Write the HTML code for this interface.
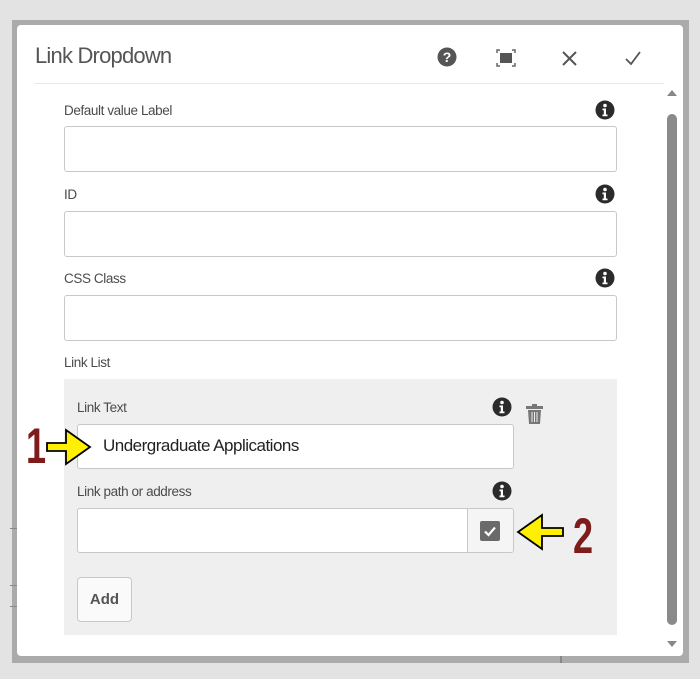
<!DOCTYPE html>
<html><head><meta charset="utf-8"><style>
*{margin:0;padding:0;box-sizing:border-box}
body{width:700px;height:679px;background:#e3e3e3;position:relative;overflow:hidden;font-family:"Liberation Sans",sans-serif}
.a{position:absolute}
.frame{left:12px;top:20px;width:677px;height:643px;background:#ababab}
.dlg{left:17px;top:25px;width:666px;height:631px;background:#fff;border-radius:4px}
.lbl{font-size:13.5px;color:#4b4b4b;letter-spacing:-0.4px}
.inp{background:#fff;border:1px solid #c8c8c8;border-radius:3px}
.info{width:20px;height:20px}
.num{font-family:"Liberation Sans Narrow","Liberation Sans",sans-serif;font-size:48px;font-weight:bold;color:#7e1b1b;transform:scale(0.75,1.05);transform-origin:left top;line-height:40px}
</style></head><body>
<div class="a frame"></div>
<div class="a" style="left:10px;top:528px;width:7px;height:1px;background:#888"></div>
<div class="a" style="left:10px;top:585px;width:7px;height:1px;background:#888"></div>
<div class="a" style="left:10px;top:606px;width:7px;height:1px;background:#888"></div>
<div class="a" style="left:560px;top:655px;width:2px;height:8px;background:#888"></div>
<div class="a dlg"></div>
<div class="a" style="left:35px;top:43px;font-size:22px;color:#555;letter-spacing:-0.8px">Link Dropdown</div>
<svg class="a" style="left:437px;top:47px" width="20" height="20" viewBox="0 0 20 20"><circle cx="10" cy="10" r="9.5" fill="#555"/><text x="10" y="15" text-anchor="middle" font-size="14" font-weight="bold" fill="#fff" font-family="Liberation Sans">?</text></svg>
<svg class="a" style="left:495px;top:48px" width="22" height="20" viewBox="0 0 22 20"><path d="M2 5V2h3M17 2h3v3M20 15v3h-3M5 18H2v-3" stroke="#666" stroke-width="1.5" fill="none"/><rect x="5" y="5" width="12" height="10" fill="#555"/></svg>
<svg class="a" style="left:561px;top:50px" width="17" height="17" viewBox="0 0 17 17"><path d="M2 2L15 15M15 2L2 15" stroke="#555" stroke-width="2"/></svg>
<svg class="a" style="left:624px;top:50px" width="18" height="16" viewBox="0 0 18 16"><path d="M2 9l5 5L16 2" stroke="#555" stroke-width="1.8" fill="none"/></svg>
<div class="a" style="left:34px;top:83px;width:630px;height:1px;background:#e8e8e8"></div>
<svg class="a" style="left:666px;top:89px" width="12" height="8"><path d="M1 7L6 1L11 7Z" fill="#888"/></svg>
<div class="a" style="left:667px;top:114px;width:10px;height:511px;background:#8a8a8a;border-radius:5px"></div>
<svg class="a" style="left:666px;top:640px" width="12" height="8"><path d="M1 1L6 7L11 1Z" fill="#888"/></svg>

<div class="a lbl" style="left:64px;top:103px">Default value Label</div>
<svg class="a info" style="left:595px;top:100px" viewBox="0 0 20 20"><circle cx="10" cy="10" r="9.5" fill="#2b2b2b"/><circle cx="10" cy="5.5" r="1.8" fill="#fff"/><path d="M7.5 8.5h3.5v6h1.5v1.8h-5v-1.8h1.3v-4.2h-1.3z" fill="#fff"/></svg>
<div class="a inp" style="left:64px;top:126px;width:553px;height:46px"></div>

<div class="a lbl" style="left:64px;top:187px">ID</div>
<svg class="a info" style="left:595px;top:184px" viewBox="0 0 20 20"><circle cx="10" cy="10" r="9.5" fill="#2b2b2b"/><circle cx="10" cy="5.5" r="1.8" fill="#fff"/><path d="M7.5 8.5h3.5v6h1.5v1.8h-5v-1.8h1.3v-4.2h-1.3z" fill="#fff"/></svg>
<div class="a inp" style="left:64px;top:211px;width:553px;height:46px"></div>

<div class="a lbl" style="left:64px;top:271px">CSS Class</div>
<svg class="a info" style="left:595px;top:268px" viewBox="0 0 20 20"><circle cx="10" cy="10" r="9.5" fill="#2b2b2b"/><circle cx="10" cy="5.5" r="1.8" fill="#fff"/><path d="M7.5 8.5h3.5v6h1.5v1.8h-5v-1.8h1.3v-4.2h-1.3z" fill="#fff"/></svg>
<div class="a inp" style="left:64px;top:295px;width:553px;height:46px"></div>

<div class="a lbl" style="left:64px;top:355px">Link List</div>
<div class="a" style="left:64px;top:379px;width:553px;height:256px;background:#efefef"></div>

<div class="a lbl" style="left:77px;top:400px">Link Text</div>
<svg class="a info" style="left:492px;top:397px" viewBox="0 0 20 20"><circle cx="10" cy="10" r="9.5" fill="#2b2b2b"/><circle cx="10" cy="5.5" r="1.8" fill="#fff"/><path d="M7.5 8.5h3.5v6h1.5v1.8h-5v-1.8h1.3v-4.2h-1.3z" fill="#fff"/></svg>
<svg class="a" style="left:525px;top:403px" width="19" height="22" viewBox="0 0 19 22"><rect x="7" y="1" width="5" height="2" fill="#777"/><rect x="1" y="3" width="17" height="3" fill="#777"/><path d="M3 7h13l-1 14H4z" fill="#777"/><path d="M7 9v10M9.5 9v10M12 9v10" stroke="#efefef" stroke-width="1"/></svg>
<div class="a inp" style="left:77px;top:424px;width:437px;height:45px"></div>
<div class="a" style="left:103px;top:436px;font-size:17px;color:#222;letter-spacing:-0.5px">Undergraduate Applications</div>

<div class="a lbl" style="left:77px;top:484px">Link path or address</div>
<svg class="a info" style="left:492px;top:481px" viewBox="0 0 20 20"><circle cx="10" cy="10" r="9.5" fill="#2b2b2b"/><circle cx="10" cy="5.5" r="1.8" fill="#fff"/><path d="M7.5 8.5h3.5v6h1.5v1.8h-5v-1.8h1.3v-4.2h-1.3z" fill="#fff"/></svg>
<div class="a inp" style="left:77px;top:508px;width:437px;height:45px"></div>
<div class="a" style="left:467px;top:509px;width:46px;height:43px;background:#f5f5f5;border-left:1px solid #c8c8c8;border-radius:0 3px 3px 0"></div>
<svg class="a" style="left:480px;top:521px" width="20" height="20" viewBox="0 0 20 20"><rect x="0" y="0" width="20" height="20" rx="2" fill="#6a6a6a"/><path d="M5 10.5l3.5 3.5L15 6.5" stroke="#fff" stroke-width="2.2" fill="none"/></svg>

<div class="a" style="left:77px;top:577px;width:55px;height:45px;border:1px solid #c8c8c8;border-radius:4px;background:#fafafa;font-size:15px;font-weight:bold;color:#555;text-align:center;line-height:43px">Add</div>

<div class="a num" style="left:26px;top:426px">1</div>
<svg class="a" style="left:44px;top:427px" width="50" height="40" viewBox="0 0 50 40"><path d="M3 16h19V3l24 17-24 17V24H3z" fill="#ffef00" stroke="#000" stroke-width="1.8"/></svg>
<svg class="a" style="left:514px;top:512px" width="52" height="40" viewBox="0 0 52 40"><path d="M49 16H28V3L4 20l24 17V24h21z" fill="#ffef00" stroke="#000" stroke-width="1.8"/></svg>
<div class="a num" style="left:573px;top:516px">2</div>
</body></html>
